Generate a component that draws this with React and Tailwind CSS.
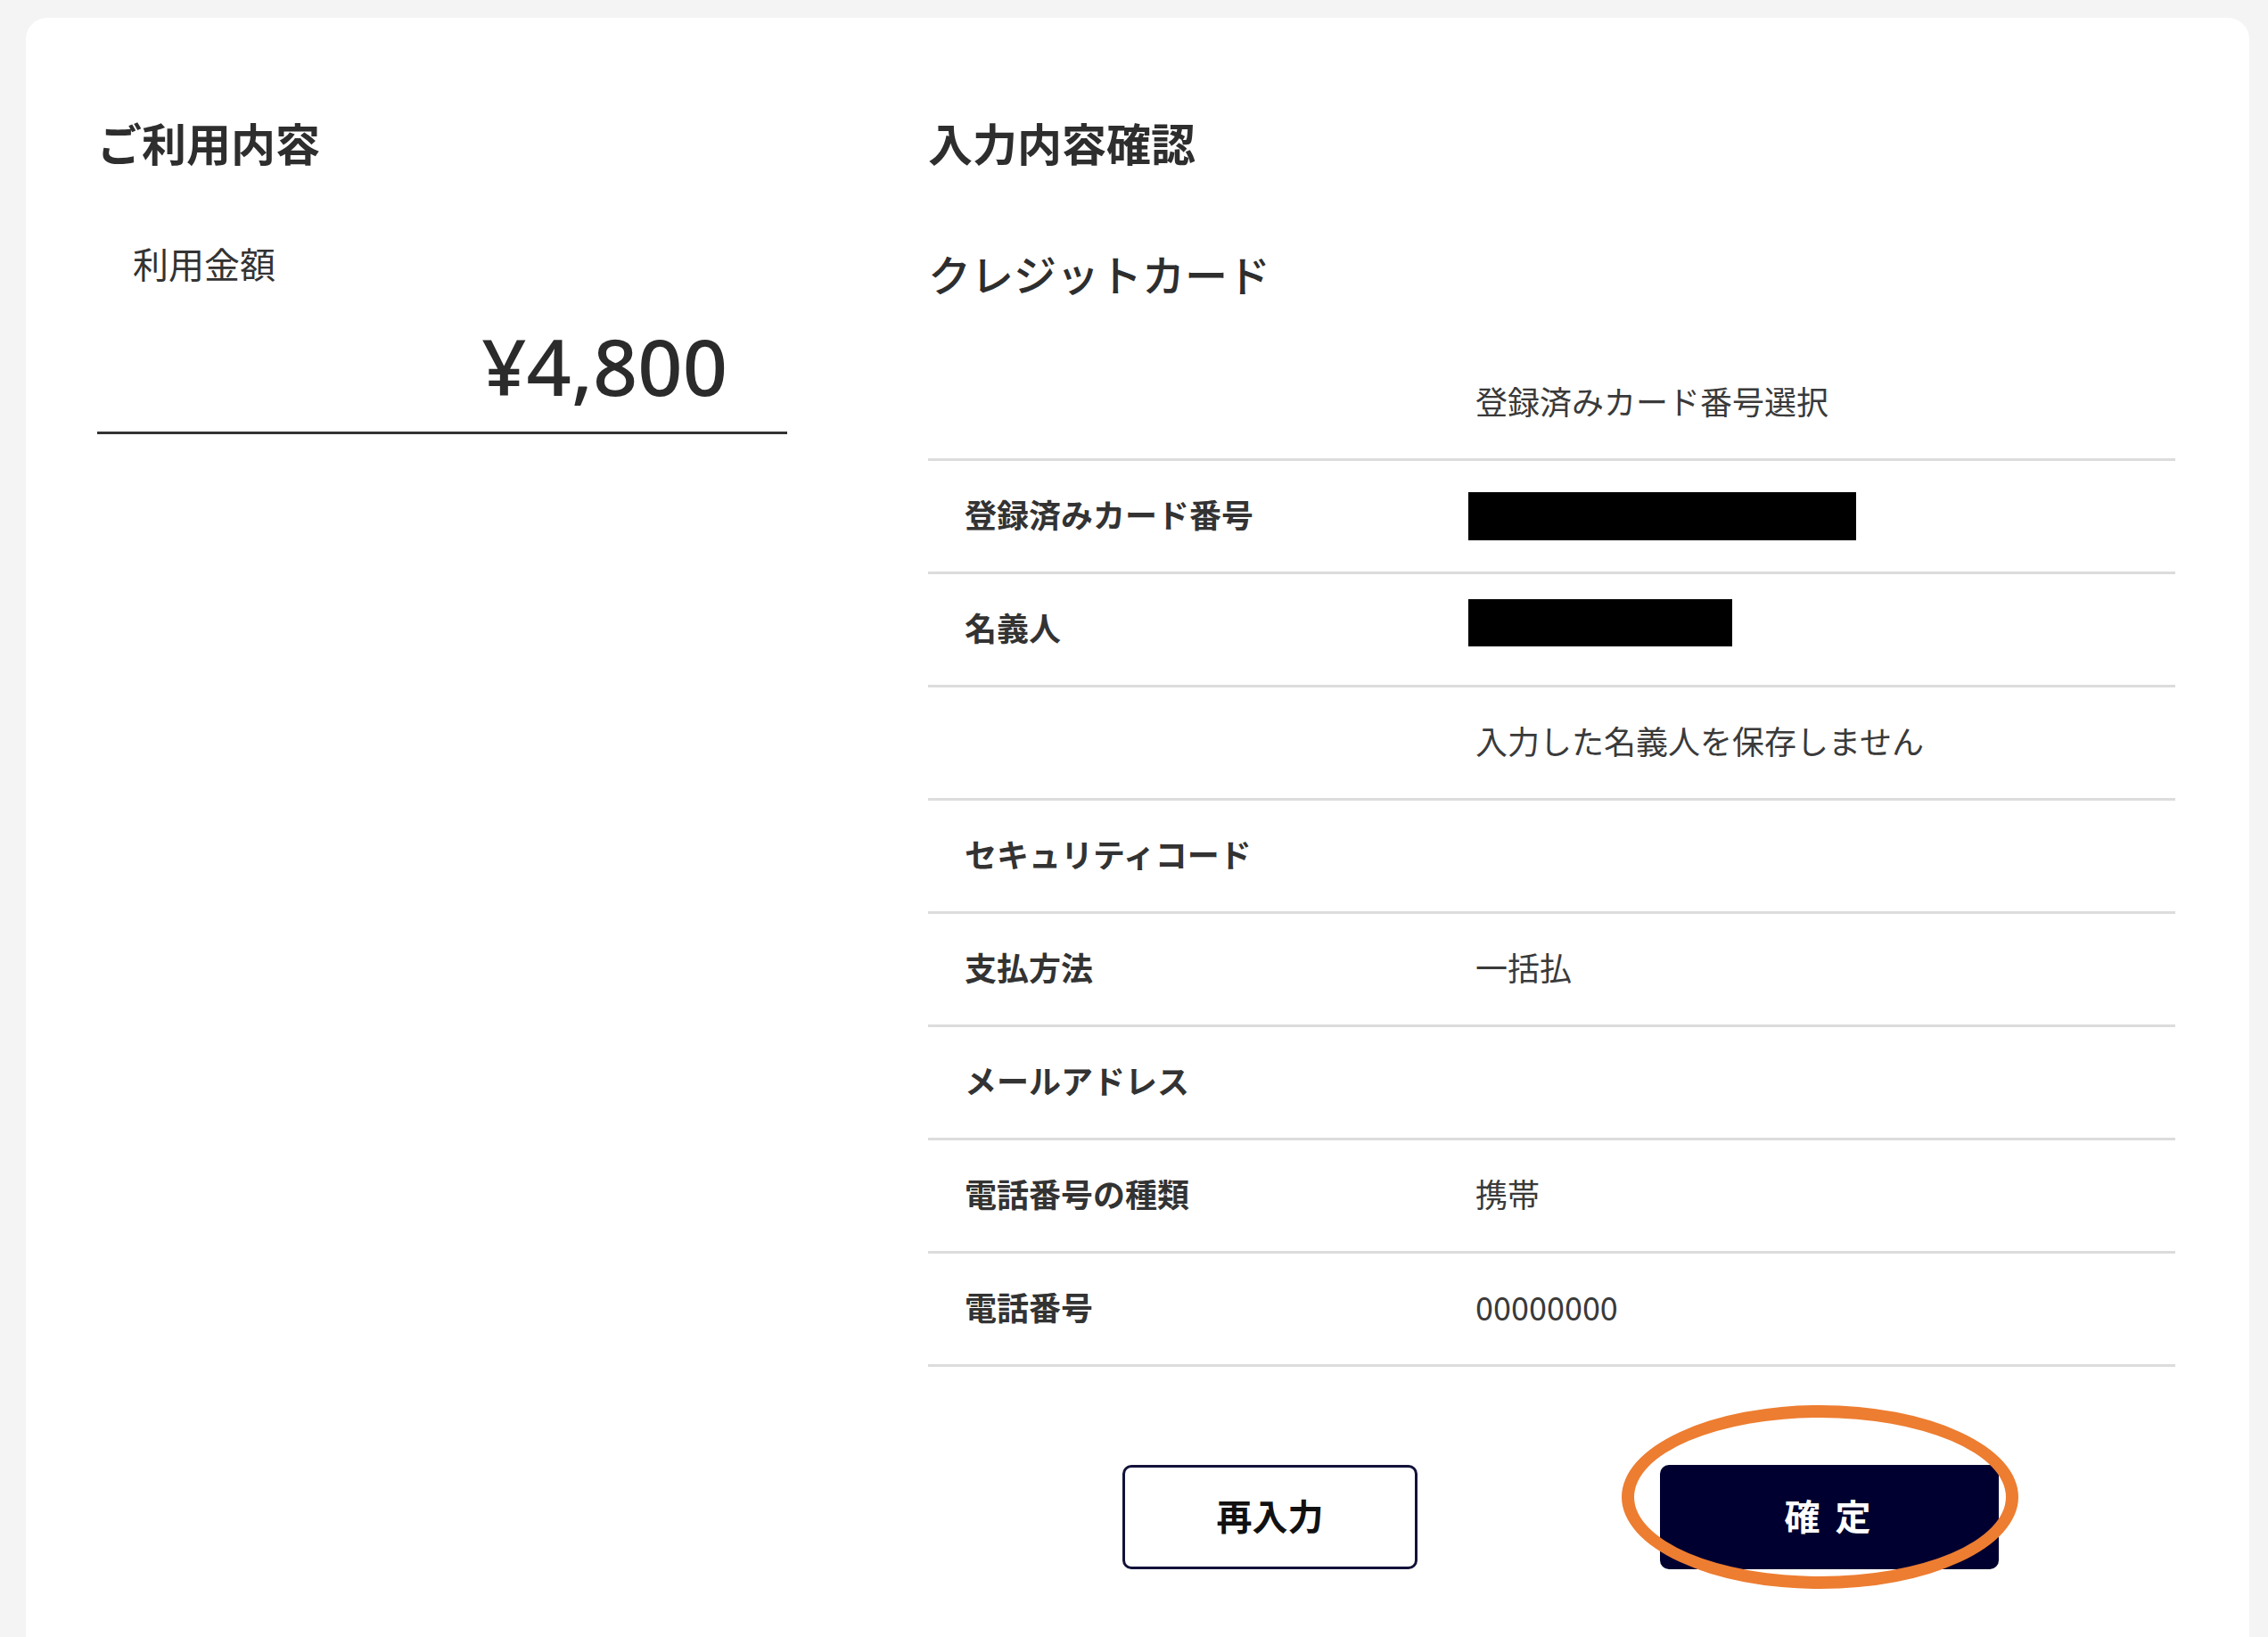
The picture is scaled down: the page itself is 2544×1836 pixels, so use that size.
import React from "react";

const rows = [
  { label: "", value: "登録済みカード番号選択" },
  { label: "登録済みカード番号", redact: "w-[435px] h-[54px] mt-[6px]" },
  { label: "名義人", redact: "w-[296px] h-[53px] mb-[10px]" },
  { label: "", value: "入力した名義人を保存しません" },
  { label: "セキュリティコード", value: "" },
  { label: "支払方法", value: "一括払" },
  { label: "メールアドレス", value: "" },
  { label: "電話番号の種類", value: "携帯" },
  { label: "電話番号", value: "00000000" },
];

export default function App() {
  return (
    <div
      className="h-[1836px] w-full overflow-hidden bg-[#f4f4f4] flex flex-col pt-[20px] pl-[29px] pr-[21px]"
      style={{ fontFamily: '"Noto Sans CJK JP", "Noto Sans", sans-serif' }}
    >
      <div className="flex-1 bg-white rounded-t-[24px] pt-[114px] pl-[80px] pr-[83px] flex gap-[158px] text-[#2e2e2e]">
        {/* Left column */}
        <div className="w-[774px] shrink-0 flex flex-col">
          <h2 className="text-[50px] leading-none font-bold">ご利用内容</h2>
          <div className="mt-[91px] ml-[40px] text-[40px] leading-none text-[#333]">利用金額</div>
          <div
            className="mt-[51px] pb-[30px] pr-[67px] text-right text-[88px] leading-none font-medium border-b-[3px] border-[#333] text-[#2b2b2b]"
            style={{ fontFamily: '"Noto Sans", sans-serif' }}
          >
            ¥4,800
          </div>
        </div>

        {/* Right column */}
        <div className="flex-1 flex flex-col">
          <h2 className="text-[50px] leading-none font-bold">入力内容確認</h2>
          <h3 className="mt-[98px] text-[48px] leading-none font-medium">クレジットカード</h3>

          <div className="mt-[60px] flex flex-col">
            {rows.map((r, i) => (
              <div
                key={i}
                className="h-[127px] box-border border-b-[3px] border-[#dcdcdc] flex items-center pb-[6px]"
              >
                <div className="w-[614px] shrink-0 pl-[41px] text-[36px] leading-none font-bold text-[#333]">
                  {r.label}
                </div>
                <div className="flex-1 text-[36px] leading-none text-[#3a3a3a]">
                  {r.redact ? (
                    <div className={`-ml-2 bg-black ${r.redact}`} />
                  ) : (
                    r.value
                  )}
                </div>
              </div>
            ))}
          </div>

          <div className="mt-[110px] flex pl-[218px] gap-[272px]">
            <button className="w-[331px] h-[117px] rounded-[10px] border-[3px] border-[#12123a] bg-white text-[40px] font-bold leading-none text-[#111] pb-[5px]">
              再入力
            </button>
            <div className="relative">
              <button className="w-[380px] h-[117px] rounded-[10px] bg-[#000030] text-white text-[40px] font-bold leading-none tracking-[4px] pb-[5px]">
                確 定
              </button>
              <div className="pointer-events-none absolute left-[-43px] top-[-67px] w-[445px] h-[206px] rounded-[50%] border-[14px] border-[#ED7D31]" />
            </div>
          </div>
        </div>
      </div>
    </div>
  );
}
